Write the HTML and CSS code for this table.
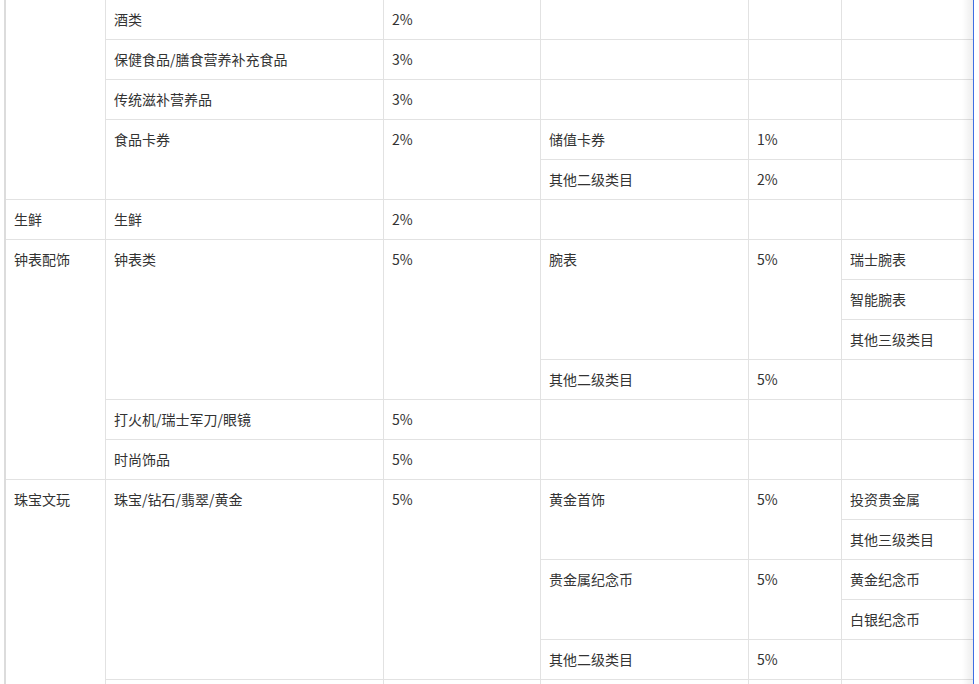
FILE: index.html
```html
<!DOCTYPE html>
<html lang="zh-CN">
<head>
<meta charset="utf-8">
<title>类目费率</title>
<link rel="stylesheet" href="styles.css">
</head>
<body>
<div class="wrap">
  <table class="rates">
    <colgroup>
      <col class="c1"><col class="c2"><col class="c3"><col class="c4"><col class="c5"><col class="c6">
    </colgroup>
    <tbody>
      <tr>
        <td rowspan="5"></td>
        <td>酒类</td><td>2%</td><td></td><td></td><td></td>
      </tr>
      <tr><td>保健食品/膳食营养补充食品</td><td>3%</td><td></td><td></td><td></td></tr>
      <tr><td>传统滋补营养品</td><td>3%</td><td></td><td></td><td></td></tr>
      <tr>
        <td rowspan="2">食品卡券</td><td rowspan="2">2%</td>
        <td>储值卡券</td><td>1%</td><td></td>
      </tr>
      <tr><td>其他二级类目</td><td>2%</td><td></td></tr>
      <tr><td>生鲜</td><td>生鲜</td><td>2%</td><td></td><td></td><td></td></tr>
      <tr>
        <td rowspan="6">钟表配饰</td>
        <td rowspan="4">钟表类</td><td rowspan="4">5%</td>
        <td rowspan="3">腕表</td><td rowspan="3">5%</td><td>瑞士腕表</td>
      </tr>
      <tr><td>智能腕表</td></tr>
      <tr><td>其他三级类目</td></tr>
      <tr><td>其他二级类目</td><td>5%</td><td></td></tr>
      <tr><td>打火机/瑞士军刀/眼镜</td><td>5%</td><td></td><td></td><td></td></tr>
      <tr><td>时尚饰品</td><td>5%</td><td></td><td></td><td></td></tr>
      <tr>
        <td rowspan="6">珠宝文玩</td>
        <td rowspan="5">珠宝/钻石/翡翠/黄金</td><td rowspan="5">5%</td>
        <td rowspan="2">黄金首饰</td><td rowspan="2">5%</td><td>投资贵金属</td>
      </tr>
      <tr><td>其他三级类目</td></tr>
      <tr><td rowspan="2">贵金属纪念币</td><td rowspan="2">5%</td><td>黄金纪念币</td></tr>
      <tr><td>白银纪念币</td></tr>
      <tr><td>其他二级类目</td><td>5%</td><td></td></tr>
      <tr><td></td><td></td><td></td><td></td><td></td></tr>
    </tbody>
  </table>
</div>
</body>
</html>
```
FILE: styles.css
```css
html, body {
  margin: 0;
  padding: 0;
  background: #fff;
}
body {
  font-family: "Noto Sans CJK SC", "Noto Sans", sans-serif;
  font-size: 14px;
  color: #333;
}
.wrap {
  position: relative;
  width: 967px;
  margin-left: 4px;
  border-left: 2px solid #dcdcdc;
  border-right: 1px solid #3d6fe3;
}
.wrap::after {
  content: "";
  position: absolute;
  top: 0;
  bottom: 0;
  right: 0;
  width: 11px;
  background: linear-gradient(to right, rgba(0,0,0,0), rgba(0,0,0,0.07));
  pointer-events: none;
}
.rates {
  width: 967px;
  table-layout: fixed;
  border-collapse: separate;
  border-spacing: 0;
}
.c1 { width: 100px; }
.c2 { width: 278px; }
.c3 { width: 157px; }
.c4 { width: 208px; }
.c5 { width: 93px; }
.c6 { width: 131px; }
.rates td {
  box-sizing: border-box;
  vertical-align: top;
  padding: 9px 8px 10px 8px;
  line-height: 20px;
  height: 40px;
  border-bottom: 1px solid #e2e2e2;
  border-right: 1px solid #e2e2e2;
  white-space: nowrap;
  overflow: hidden;
}
.rates tr td:last-child {
  border-right: none;
}
```
